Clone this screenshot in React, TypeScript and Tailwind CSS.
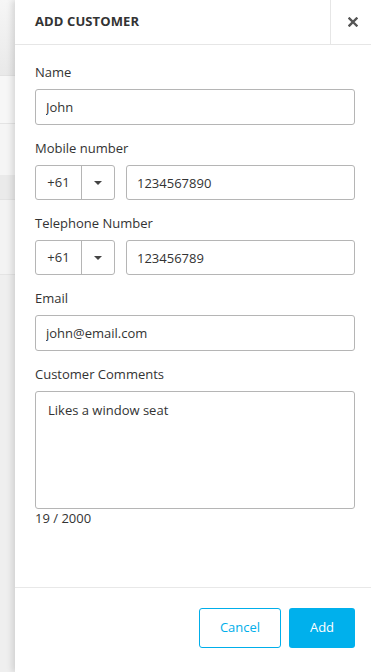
import { useState } from "react"

function Caret() {
  return (
    <svg width="8" height="4" viewBox="0 0 8 4" className="text-[#444]">
      <path d="M0 0h8L4 4z" fill="currentColor" />
    </svg>
  )
}

function PhoneField({ label, value }: { label: string; value: string }) {
  return (
    <div className="mt-[14px]">
      <label className="block text-[13px] leading-[18px] mb-2">{label}</label>
      <div className="flex gap-[11px]">
        <div className="flex h-[35px] w-[80px] rounded-[3px] border border-[#b5b5b5]">
          <div className="flex w-[46px] items-center justify-center border-r border-[#b5b5b5] text-[13px]">+61</div>
          <div className="flex flex-1 items-center justify-center">
            <Caret />
          </div>
        </div>
        <input
          defaultValue={value}
          className="h-[35px] flex-1 rounded-[3px] border border-[#b5b5b5] px-[10px] text-[13px] text-[#333] outline-none"
        />
      </div>
    </div>
  )
}

export default function App() {
  const [comments, setComments] = useState("Likes a window seat")

  return (
    <div className="flex h-[672px] w-[371px] overflow-hidden bg-white text-[#333] [font-family:'Open_Sans',sans-serif]">
      {/* dimmed page behind the drawer */}
      <div className="flex w-[15px] flex-col bg-[#f1f1f1]">
        <div className="h-[76px] bg-gradient-to-b from-[#f6f6f6] to-[#e9e9e9] border-b border-[#e2e2e2]" />
        <div className="h-[48px] bg-[#f7f7f7] border-b border-[#e4e4e4]" />
        <div className="h-[51px] bg-[#f5f5f5]" />
        <div className="h-[25px] bg-[#eaeaea] border-b border-[#e2e2e2]" />
        <div className="h-[75px] bg-[#f3f3f3] border-b border-[#e4e4e4]" />
        <div className="flex-1 bg-[#efefef]" />
      </div>

      <div className="relative flex flex-1 flex-col bg-white shadow-[-3px_0_6px_rgba(0,0,0,0.12)]">
        {/* header */}
        <div className="flex h-[45px] items-center border-b border-[#e6e6e6]">
          <h2 className="flex-1 pl-5 text-[13px] font-bold tracking-[0.1px] text-[#333]">ADD CUSTOMER</h2>
          <button className="flex h-full w-[41px] items-center justify-center border-l border-[#e6e6e6] pl-[3px]">
            <svg width="10" height="10" viewBox="0 0 10 10">
              <path d="M1.5 1.5l7 7M8.5 1.5l-7 7" stroke="#555" strokeWidth="2.4" strokeLinecap="square" />
            </svg>
          </button>
        </div>

        {/* form */}
        <div className="flex-1 px-5 pr-4 pt-[4px]">
          <div className="mt-[14px]">
            <label className="block text-[13px] leading-[18px] mb-2">Name</label>
            <input
              defaultValue="John"
              className="h-[36px] w-full rounded-[3px] border border-[#b5b5b5] px-[10px] text-[13px] text-[#333] outline-none"
            />
          </div>

          <PhoneField label="Mobile number" value="1234567890" />
          <PhoneField label="Telephone Number" value="123456789" />

          <div className="mt-[14px]">
            <label className="block text-[13px] leading-[18px] mb-2">Email</label>
            <input
              defaultValue="john@email.com"
              className="h-[36px] w-full rounded-[3px] border border-[#b5b5b5] px-[10px] text-[13px] text-[#333] outline-none"
            />
          </div>

          <div className="mt-[14px]">
            <label className="block text-[13px] leading-[18px] mb-2">Customer Comments</label>
            <textarea
              value={comments}
              onChange={(e) => setComments(e.target.value)}
              className="block h-[118px] w-full resize-none rounded-[3px] border border-[#b5b5b5] px-3 py-[9px] text-[13px] leading-[18px] text-[#333] outline-none"
            />
            <div className="text-[13px] leading-[18px]">{comments.length} / 2000</div>
          </div>
        </div>

        {/* footer */}
        <div className="flex h-[85px] items-start justify-end gap-2 border-t border-[#e8e8e8] pt-5 pr-4">
          <button className="h-[40px] w-[82px] rounded-[3px] border border-[#00aeea] text-[13px] text-[#00aeea]">
            Cancel
          </button>
          <button className="h-[40px] w-[66px] rounded-[3px] bg-[#00b0ec] text-[13px] text-white">
            Add
          </button>
        </div>
      </div>
    </div>
  )
}
